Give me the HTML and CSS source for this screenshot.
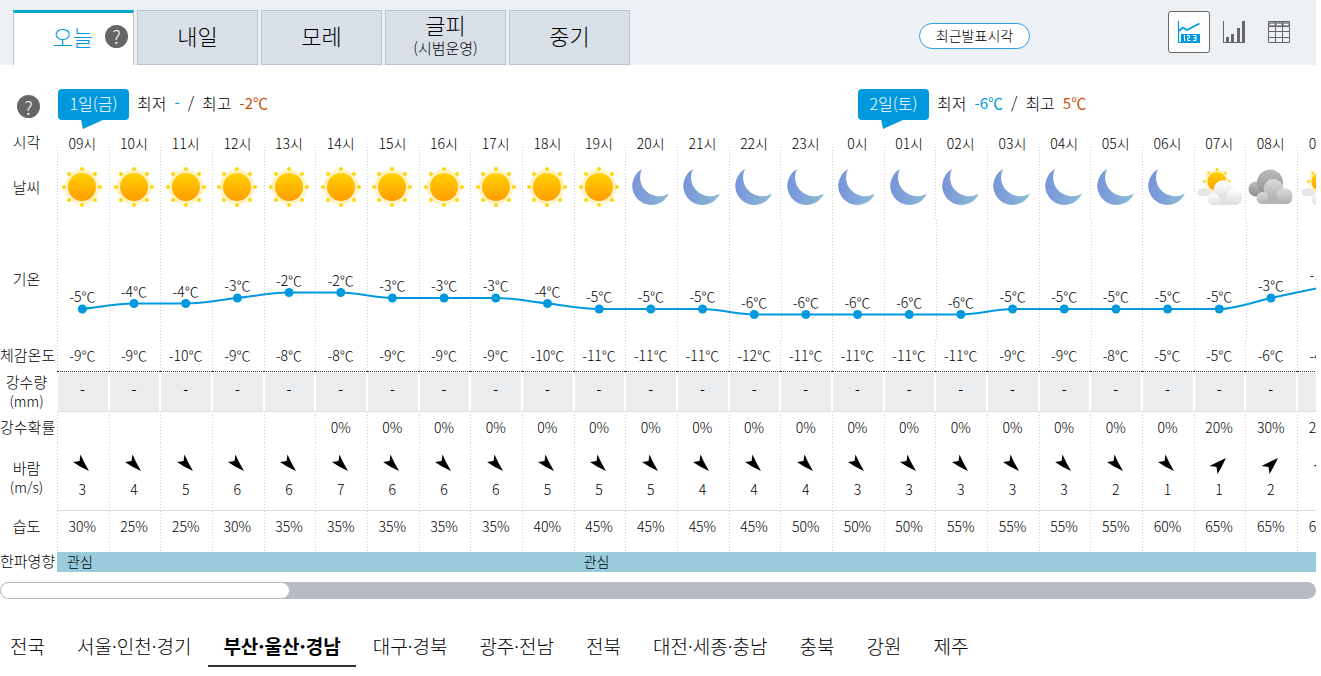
FILE: index.html
```html
<!DOCTYPE html>
<html lang="ko">
<head>
    <meta charset="UTF-8">
    <title>날씨 예보</title>
    <link rel="stylesheet" href="styles.css">
</head>
<body>
    <svg class="symbols" width="0" height="0" aria-hidden="true">
        <defs>
            <linearGradient id="g-sun" x1="0" y1="0" x2="0" y2="1">
                <stop offset="0" stop-color="#ffd200"/>
                <stop offset="1" stop-color="#ff9c00"/>
            </linearGradient>
            <linearGradient id="g-moon" x1="0" y1="0" x2="1" y2="0">
                <stop offset="0" stop-color="#7893dc"/>
                <stop offset="1" stop-color="#8cbcd4"/>
            </linearGradient>
            <linearGradient id="g-white" x1="0" y1="0" x2="0" y2="1">
                <stop offset="0" stop-color="#ffffff"/>
                <stop offset="1" stop-color="#dedede"/>
            </linearGradient>
            <linearGradient id="g-gray" x1="0" y1="0" x2="0" y2="1">
                <stop offset="0" stop-color="#bdbdbd"/>
                <stop offset="1" stop-color="#8e8e8e"/>
            </linearGradient>
            <linearGradient id="g-light" x1="0" y1="0" x2="0" y2="1">
                <stop offset="0" stop-color="#dcdcdc"/>
                <stop offset="1" stop-color="#b0b0b0"/>
            </linearGradient>
        </defs>
        <symbol id="sun" viewBox="-24 -20 48 40">
            <circle r="17.5" fill="#fff3c4"/>
            <circle r="14" fill="url(#g-sun)"/>
            <g fill="#ffd80c">
                <circle cx="0" cy="-18" r="2"/><circle cx="0" cy="18" r="2"/>
                <circle cx="-18" cy="0" r="2"/><circle cx="18" cy="0" r="2"/>
                <circle cx="-13" cy="-13" r="2"/><circle cx="13" cy="-13" r="2"/>
                <circle cx="-13" cy="13" r="2"/><circle cx="13" cy="13" r="2"/>
            </g>
        </symbol>
        <symbol id="moon" viewBox="-24 -20 48 40">
            <path d="M-9 -18 A19.2 19.2 0 1 0 18 6.5 A19 19 0 0 1 -9 -18Z" fill="url(#g-moon)"/>
        </symbol>
        <symbol id="partly" viewBox="-24 -20 48 40">
            <circle cx="-2" cy="-5.5" r="12" fill="#fff3c4"/>
            <circle cx="-2" cy="-5.5" r="9.5" fill="url(#g-sun)"/>
            <g fill="#ffd80c">
                <circle cx="-2" cy="-17.5" r="1.4"/><circle cx="-10.5" cy="-14" r="1.4"/>
                <circle cx="6.5" cy="-14" r="1.4"/><circle cx="-14.5" cy="-5.5" r="1.4"/>
                <circle cx="-11" cy="4" r="1.4"/><circle cx="10" cy="-5.5" r="1.4"/>
            </g>
            <path d="M-18 9 a3.5 3.5 0 0 1 0 -7 a5 5 0 0 1 7 1 a3 3 0 0 1 1 6z" fill="#e6e6e6"/>
            <circle cx="4.5" cy="3" r="10" fill="url(#g-white)"/>
            <rect x="-11" y="7" width="33" height="11" rx="5" fill="#e2e2e2"/>
            <circle cx="-5.5" cy="12" r="6" fill="url(#g-white)"/>
            <circle cx="15.5" cy="9.5" r="8" fill="url(#g-white)"/>
        </symbol>
        <symbol id="cloudy" viewBox="-24 -20 48 40">
            <circle cx="-15" cy="2" r="7.5" fill="url(#g-gray)"/>
            <circle cx="-1" cy="-4.5" r="13" fill="url(#g-gray)"/>
            <rect x="-14" y="6" width="35" height="11" rx="5" fill="#b4b4b4"/>
            <circle cx="2.5" cy="2" r="10" fill="url(#g-light)"/>
            <circle cx="-8.5" cy="11" r="6" fill="url(#g-light)"/>
            <circle cx="13.5" cy="9" r="8" fill="url(#g-light)"/>
        </symbol>
        <symbol id="wind-se" viewBox="-12 -12 24 24">
            <path d="M-9 -1 L-2.5 -2 L-1.5 -8.5 L2 -1 L7 8 L-2 3.5Z"/>
        </symbol>
        <symbol id="wind-ne" viewBox="-12 -12 24 24">
            <path d="M-9.5 3 L-2.5 4 L-1.5 11 L2.5 4 L7 -5 L-2.5 -.5Z"/>
        </symbol>
    </svg>

    <div class="header">
        <div class="tabs">
            <div class="tab active">
                <button class="tab-button">오늘</button>
                <button class="help" aria-label="도움말">?</button>
            </div>
            <button class="tab">내일</button>
            <button class="tab">모레</button>
            <button class="tab">글피<small>(시범운영)</small></button>
            <button class="tab">중기</button>
        </div>
        <button class="announce">최근발표시각</button>
        <div class="views">
            <button class="view active" aria-label="그래프와 숫자">
                <svg width="24" height="24" viewBox="0 0 24 24" fill="none" stroke="#0099e0">
                    <path d="M1.5 1v21.500H23" stroke-width="1.2"/>
                    <path d="M2 11l4-3.500 4 2.500 12.500-6.500" stroke-width="1.8"/>
                    <rect x="4" y="14" width="19" height="8" fill="#0099e0" stroke="none"/>
                    <path d="M7.500 15v6M10 15.500h2.500v2.500h-2v2.500h3M16 15.500h3v5h-3M16.500 18h2.500" stroke="#fff"/>
                </svg>
            </button>
            <button class="view" aria-label="그래프">
                <svg width="24" height="24" viewBox="0 0 24 24">
                    <path d="M1 1h1v21h21v1H1z" fill="#666"/>
                    <path d="M4 17h3v5H4zM9 14h3v8H9zM15 8h3v14h-3zM20 1h3v21h-3z" fill="#666"/>
                </svg>
            </button>
            <button class="view" aria-label="표">
                <svg width="24" height="24" viewBox="0 0 24 24" fill="none" stroke="#666">
                    <path d="M2 1.500h20v5H2z" fill="#999" stroke="none"/>
                    <path d="M1.500 1.500h21v21h-21zM1.500 6.500h21M1.500 11.500h21M1.500 17.500h21M8.500 1v21M15.500 1v21"/>
                    <path d="M3 4.500h4M10 4.500h4M17 4.500h4" stroke="#fff"/>
                </svg>
            </button>
        </div>
    </div>

    <div class="forecast">
        <table class="forecast-table">
            <colgroup id="cols">
                <col class="col-label">
            </colgroup>
            <thead>
                <tr class="row-date">
                    <th class="label"><button class="help" aria-label="도움말">?</button></th>
                    <th colspan="15">
                        <div class="day">
                            <span class="day-name">1일(금)</span>
                            <span>최저</span><span class="low">-</span><span>/</span><span>최고</span><span class="high">-2℃</span>
                        </div>
                    </th>
                    <th colspan="10" class="next-day">
                        <div class="day">
                            <span class="day-name">2일(토)</span>
                            <span>최저</span><span class="low">-6℃</span><span>/</span><span>최고</span><span class="high">5℃</span>
                        </div>
                    </th>
                </tr>
            </thead>
            <tbody>
                <tr class="row-hour" id="row-hour"><th class="label">시각</th></tr>
                <tr class="row-weather" id="row-weather"><th class="label">날씨</th></tr>
                <tr class="row-temp"><th class="label">기온</th><td colspan="25" id="chart"></td></tr>
                <tr class="row-feels" id="row-feels"><th class="label">체감온도</th></tr>
                <tr class="row-rain" id="row-rain"><th class="label">강수량<small>(mm)</small></th></tr>
                <tr class="row-prob" id="row-prob"><th class="label">강수확률</th></tr>
                <tr class="row-wind" id="row-wind"><th class="label">바람<small>(m/s)</small></th></tr>
                <tr class="row-humid" id="row-humid"><th class="label">습도</th></tr>
                <tr class="row-impact"><th class="label">한파영향</th><td colspan="10">관심</td><td colspan="15">관심</td></tr>
            </tbody>
        </table>
    </div>
    <div class="scrollbar"><div class="thumb"></div></div>

    <nav class="regions">
        <a href="#">전국</a>
        <a href="#">서울·인천·경기</a>
        <a href="#" class="active">부산·울산·경남</a>
        <a href="#">대구·경북</a>
        <a href="#">광주·전남</a>
        <a href="#">전북</a>
        <a href="#">대전·세종·충남</a>
        <a href="#">충북</a>
        <a href="#">강원</a>
        <a href="#">제주</a>
    </nav>
    <script src="app.js"></script>
</body>
</html>
```
FILE: styles.css
```css
* {
    box-sizing: border-box;
}

body {
    margin: 0;
    padding-right: 5px;
    background-color: #fff;
    color: #000;
    font-family: "Noto Sans CJK KR", sans-serif;
    font-size: 14px;
    font-weight: 300;
    line-height: 20px;
    overflow-x: hidden;
}

button {
    font: inherit;
    color: inherit;
    padding: 0;
    border: none;
    background: none;
    cursor: pointer;
}

small {
    display: block;
    font-size: 14px;
    line-height: 18px;
}

.symbols {
    position: absolute;
}

.header {
    display: flex;
    height: 65px;
    padding: 10px 16px 0 13px;
    background-color: #edf0f5;
}

.tabs {
    display: flex;
    gap: 3px;
}

.tab {
    width: 121px;
    height: 55px;
    padding-bottom: 6px;
    border: 1px solid #b9c4d3;
    background-color: #d9e0e8;
    font-size: 22px;
    line-height: 26px;
}

.tab small {
    font-size: 15px;
    line-height: 22px;
}

.tab.active {
    display: flex;
    align-items: center;
    justify-content: flex-end;
    gap: 12px;
    padding-right: 5px;
    border-top: 3px solid #00aad2;
    border-bottom: none;
    background-color: #fff;
    color: #0099e0;
}

.help {
    width: 23px;
    height: 23px;
    border-radius: 50%;
    background-color: #666;
    color: #fff;
    font-size: 18px;
    line-height: 22px;
}

.announce {
    width: 111px;
    height: 26px;
    margin: 13px 0 0 auto;
    padding-bottom: 3px;
    border: 1px solid #2ba3dd;
    border-radius: 13px;
    background-color: #fff;
}

.views {
    display: flex;
    gap: 3px;
    margin: 1px 0 0 138px;
}

.view {
    display: flex;
    align-items: center;
    justify-content: center;
    width: 42px;
    height: 42px;
    border-radius: 3px;
}

.view.active {
    border: 1px solid #666;
    background-color: #fff;
}

.forecast {
    overflow: hidden;
    padding-top: 15px;
}

.forecast-table {
    width: 1349px;
    table-layout: fixed;
    border-collapse: separate;
    border-spacing: 0;
    text-align: center;
}

.forecast-table th {
    padding: 0;
    font-weight: 300;
}

/* dotted column line on the left edge of each cell */
.forecast-table td {
    padding: 0 1px 2px 0;
    background: repeating-linear-gradient(#ccc 0 1px, transparent 1px 3px) left bottom / 1px 100% no-repeat;
}

.col-label {
    width: 57px;
}

.label {
    font-size: 15px;
    white-space: nowrap;
}

.forecast-table .label {
    padding: 0 4px 2px 0;
}

.row-date th {
    height: 51px;
    vertical-align: top;
    padding-top: 9px;
}

.forecast-table .row-date .label {
    padding: 15px 0 0;
}

.row-date .next-day {
    padding-left: 25px;
}

.day {
    display: flex;
    align-items: flex-start;
    gap: 8px;
    height: 31px;
    font-size: 16px;
    line-height: 28px;
}

.day-name {
    position: relative;
    width: 71px;
    height: 31px;
    margin-left: 1px;
    border-radius: 4px;
    background-color: #0099e0;
    color: #fff;
}

.day-name::after {
    content: "";
    position: absolute;
    top: 30px;
    left: 23px;
    width: 24px;
    height: 10px;
    background-color: #0099e0;
    clip-path: polygon(0 0, 100% 0, 8% 100%);
}

.low,
.high {
    font-size: 15px;
    font-weight: 400;
}

.low {
    color: #0099e0;
}

.high {
    color: #c8500a;
}

.row-hour > * {
    height: 24px;
}

.forecast-table .row-hour td {
    padding-bottom: 0;
    background-size: 1px 8px;
}

.row-weather > * {
    height: 65px;
}

.row-weather svg,
.row-wind svg,
#chart svg {
    display: block;
    margin: 0 auto;
}

.row-temp > * {
    height: 120px;
}

.forecast-table #chart {
    padding: 0;
    background: none;
}

.row-feels > * {
    height: 32px;
}

.row-feels td {
    border-bottom: 1px dotted #333;
}

.row-rain > * {
    height: 40px;
}

.forecast-table .row-rain td {
    padding-bottom: 4px;
    border-left: 1px solid #fff;
    border-right: 1px solid #fff;
    border-top: 1px solid #fff;
    border-bottom: 1px solid #ddd;
    background: #ebecee;
    font-weight: 400;
}

.row-prob > * {
    height: 32px;
}

.row-wind > * {
    height: 67px;
}

.row-wind svg {
    margin-bottom: 4px;
}

.forecast-table .row-wind td {
    padding-bottom: 4px;
    border-bottom: 1px solid #ddd;
}

.row-humid > * {
    height: 41px;
}

.forecast-table .row-humid > * {
    padding-bottom: 11px;
}

.row-impact > * {
    height: 20px;
    line-height: 16px;
}

.forecast-table .row-impact td {
    padding-left: 10px;
    background: #99cbdd;
    text-align: left;
}

.temp-line {
    fill: none;
    stroke: #0099e0;
    stroke-width: 2;
}

.temp-grid {
    stroke: #ccc;
    stroke-dasharray: 1 2;
}

.temp-dot {
    fill: #0099e0;
}

.scrollbar {
    height: 17px;
    margin-top: 10px;
    border-radius: 9px;
    background-color: #b6bbc4;
    overflow: hidden;
}

.thumb {
    width: 22%;
    height: 17px;
    border: 1px solid #b6bbc4;
    border-radius: 9px;
    background-color: #fff;
}

.regions {
    display: flex;
    gap: 2px;
    padding-top: 30px;
    font-size: 19px;
}

.regions a {
    padding: 4px 15px 0;
    height: 38px;
    line-height: 26px;
    color: #000;
    text-decoration: none;
    white-space: nowrap;
}

.regions a:first-child {
    padding-left: 10px;
}

.regions .active {
    border-bottom: 2px solid #333;
    font-weight: 700;
}
```
FILE: app.js
```js
var hours = ['09', '10', '11', '12', '13', '14', '15', '16', '17', '18', '19', '20', '21', '22', '23', '0', '01', '02', '03', '04', '05', '06', '07', '08', '09'];
var temps = [-5, -4, -4, -3, -2, -2, -3, -3, -3, -4, -5, -5, -5, -6, -6, -6, -6, -6, -5, -5, -5, -5, -5, -3, -1];
var feels = [-9, -9, -10, -9, -8, -8, -9, -9, -9, -10, -11, -11, -11, -12, -11, -11, -11, -11, -9, -9, -8, -5, -5, -6, -4];
var probs = ['', '', '', '', '', 0, 0, 0, 0, 0, 0, 0, 0, 0, 0, 0, 0, 0, 0, 0, 0, 0, 20, 30, 20];
var winds = [3, 4, 5, 6, 6, 7, 6, 6, 6, 5, 5, 5, 4, 4, 4, 3, 3, 3, 3, 3, 2, 1, 1, 2, 2];
var humids = [30, 25, 25, 30, 35, 35, 35, 35, 35, 40, 45, 45, 45, 45, 50, 50, 50, 55, 55, 55, 55, 60, 65, 65, 60];

function icon(name, w, h) {
    return '<svg width="' + w + '" height="' + h + '"><use href="#' + name + '"/></svg>';
}

function weather(i) {
    if (i < 11) return 'sun';
    if (i < 22) return 'moon';
    return i === 23 ? 'cloudy' : 'partly';
}

function fillRow(id, cell) {
    var html = '';
    for (var i = 0; i < hours.length; i++) {
        html += '<td>' + cell(i) + '</td>';
    }
    document.getElementById(id).insertAdjacentHTML('beforeend', html);
}

document.getElementById('cols').insertAdjacentHTML('beforeend', '<col>'.repeat(hours.length));

fillRow('row-hour', function (i) { return hours[i] + '시'; });
fillRow('row-weather', function (i) { return icon(weather(i), 48, 40); });
fillRow('row-feels', function (i) { return feels[i] + '℃'; });
fillRow('row-rain', function () { return '-'; });
fillRow('row-prob', function (i) { return probs[i] === '' ? '' : probs[i] + '%'; });
fillRow('row-wind', function (i) { return icon(i < 22 ? 'wind-se' : 'wind-ne', 24, 24) + winds[i]; });
fillRow('row-humid', function (i) { return humids[i] + '%'; });

function drawChart() {
    var box = document.getElementById('chart');
    var width = box.clientWidth;
    var step = width / temps.length;
    var grid = '', marks = '', path = '';
    var pts = temps.map(function (t, i) {
        return { x: step * (i + 0.5) - 0.5, y: 61.5 - t * 5.5 };
    });
    // flat tangents at peaks and plateaus, so the curve never overshoots
    var slopes = pts.map(function (p, i) {
        if (i === 0 || i === pts.length - 1) return null;
        var a = p.y - pts[i - 1].y, b = pts[i + 1].y - p.y;
        return a * b > 0 ? 2 * a * b / (a + b) : 0;
    });
    slopes[0] = pts[1].y - pts[0].y;
    slopes[pts.length - 1] = pts[pts.length - 1].y - pts[pts.length - 2].y;

    pts.forEach(function (p, i) {
        var gx = Math.round(step * i) + 0.5;
        grid += '<line class="temp-grid" x1="' + gx + '" x2="' + gx + '" y1="0" y2="120"/>';
        marks += '<circle class="temp-dot" cx="' + p.x + '" cy="' + p.y + '" r="4.5"/>';
        marks += '<text x="' + p.x + '" y="' + (p.y - 7) + '" text-anchor="middle">' + temps[i] + '℃</text>';
        if (i === 0) {
            path = 'M' + p.x + ' ' + p.y;
        } else {
            var q = pts[i - 1];
            path += 'C' + (q.x + step / 3) + ' ' + (q.y + slopes[i - 1] / 3) + ' ' +
                (p.x - step / 3) + ' ' + (p.y - slopes[i] / 3) + ' ' + p.x + ' ' + p.y;
        }
    });
    box.innerHTML = '<svg width="' + width + '" height="120">' + grid +
        '<path class="temp-line" d="' + path + '"/>' + marks + '</svg>';
}

drawChart();
```
